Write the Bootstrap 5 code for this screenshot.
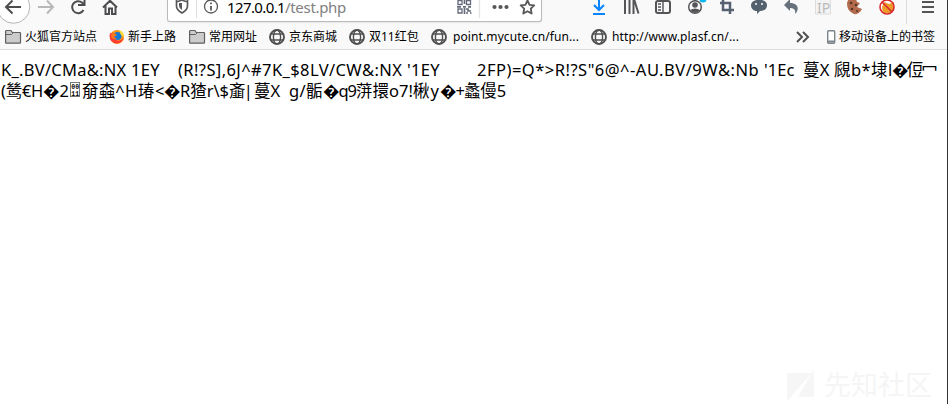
<!DOCTYPE html>
<html lang="zh-CN"><head><meta charset="utf-8"><title>127.0.0.1/test.php</title>
<link rel="stylesheet" href="https://cdn.jsdelivr.net/npm/bootstrap@5.3.0/dist/css/bootstrap.min.css">
<style>
body{width:948px;height:404px;font-family:"Noto Sans","Noto Sans CJK SC",sans-serif;color:#000;border-right:1px solid #333}
svg{display:block;flex:none;overflow:visible}
.chrome{height:50px;background:#f9f9fa;border-bottom:1px solid #ddd}
.toolrow{height:22px}
.nav-icons{width:167px;height:22px}
.urlbox{width:375px;height:22px;background:#fff;border:1px solid #bbb;border-top:0;border-radius:0 0 3px 3px;box-shadow:0 1px 2px #0001}
.urltext{width:228px;font-size:15px;line-height:14px}
.host-part{color:#000}.path-part{color:#808080}
.bookmarks{height:30px;font-size:12px;line-height:18px}
.bm{display:flex;align-items:center;gap:4px;white-space:nowrap;flex:none}
.content-line{height:21px;font-size:16.5px;line-height:21px;padding-left:1px}
[data-w]{display:block;flex:none;white-space:pre}
.watermark{position:absolute;left:786px;top:368px;color:#f5f5f5;font-size:27px;line-height:34px}
</style></head><body class="m-0 bg-white overflow-hidden position-relative">
<svg width="0" height="0" class="position-absolute"><defs>
<g id="folder"><path d="M.6 13.500V2.200Q.6 1.500 1.300 1.500H6l1.300 2h7.500q.7 0 .7.700v9.300q0 .7-.7.700H1.300q-.7 0-.7-.7Z" fill="#ccc" stroke="#606060" stroke-width="1.200"/><path d="M1 5.500H6.500L8 4" fill="none" stroke="#606060"/></g>
<g id="globe" fill="none" stroke="#505050" stroke-width="1.400"><circle cx="8" cy="8" r="7" stroke-width="1.900"/><ellipse cx="8" cy="8" rx="3.600" ry="7"/><path d="M2 5H14M2 11H14"/></g>
</defs></svg>
<header class="chrome"><div class="toolrow d-flex">
<svg class="nav-icons" viewBox="0 0 167 22" fill="none" stroke="#4d4d4f" stroke-width="2"><circle cx="13.500" cy="7" r="16.300" fill="#fff" stroke="#b5b5b5" stroke-width="1"/><path d="M21 7H6.500M12.500 .5 6 7l6.500 6.500"/><path d="M38 7H52M47 .5 53 7l-6 6.500" stroke="#b8b8b8"/><path d="M83.500 10A6 6 0 1 1 82 2.500L84 5M84.500-1V5H78"/><path d="M103 7.500 110 .7l7 6.800M105.500 6v8h3.500V8.500h3V14h3.500V6"/></svg>
<div class="urlbox d-flex">
<svg width="59" height="22" fill="none" stroke="#57575a"><path d="M14 0q4 2 5.500 1V6q0 4-5.500 7-5.500-3-5.500-7V1Q10 2 14 0Z" stroke-width="1.700"/><path d="M14 3v7q-3-2-3-4V3Z" fill="#57575a" stroke="none"/><path d="M28.500 0v18" stroke="#ddd"/><circle cx="43" cy="6.500" r="6.500" stroke-width="1.300"/><path d="M43 6v4.500M43 2.500v1.700" stroke-width="1.800"/></svg>
<div class="urltext d-flex"><span class="host-part" data-w="58">127.0.0.1</span><span class="path-part" data-w="61">/test.php</span></div>
<svg width="86" height="22" fill="none" stroke="#65697b" stroke-width="1.300"><path d="M3 .5h4v4H3ZM11.500 .5h4v4h-4ZM3 9h4v4H3Z"/><path d="M9.500 0v4M2 6.800h4M8 6.800h3M13 6.800h3M9.500 8v6M11 9h2v2h3M11 13h2M15 13h1.500" stroke-width="1.700"/><path d="M24.500 0v18" stroke="#e3e3e3"/><g fill="#57575a" stroke="none"><circle cx="39.500" cy="7" r="2.100"/><circle cx="45.500" cy="7" r="2.100"/><circle cx="51.500" cy="7" r="2.100"/></g><path d="m72.500 .5 2 4.300 4.700.6-3.400 3.300.8 4.800-4.100-2.300-4.200 2.300.9-4.800-3.500-3.300 4.700-.6Z" stroke="#57575a" stroke-width="1.800" stroke-linejoin="round"/></svg></div>
<svg width="405" height="24" viewBox="542 0 405 24" fill="none" stroke="#555558" stroke-width="2"><g stroke="#0a84ff"><path d="M599-1V9M594 5l5 5 5-5M593 14h12"/></g><path d="M625 0v14M629.500 0v14M633.500 0v14M634-1l4.500 14.500"/><rect x="656" y="1" width="14" height="12" rx="2"/><path d="M663 1v12M658 4h3M658 7h3M658 10h3" stroke-width="1.400"/><circle cx="695" cy="7" r="6.300" stroke-width="1.500"/><circle cx="695" cy="5" r="2.800" fill="#555558" stroke="none"/><path d="M690 10q5-3 10 0-2 3-5 3t-5-3Z" fill="#555558" stroke="none"/><circle cx="703" cy="-1" r="3.500" fill="#00b7f0" stroke="none"/><path d="M723 0v10h11M720 3h10v11" stroke="#566270" stroke-width="2.500"/><path d="M751 5c0-7 16-7 16 0 0 5-4 6-7 6l-3 3v-3c-3 0-6-2-6-6Z" fill="#53616e" stroke="none"/><circle cx="756" cy="4" r="1" fill="#fff" stroke="none"/><circle cx="762" cy="4" r="1" fill="#fff" stroke="none"/><path d="m784 5 6-6v4c8 0 10 6 5 11 1-4-1-6-5-6v3Z" fill="#66717c" stroke="none"/><rect x="815.500" y="-1" width="15" height="15" fill="#f3f3f3" stroke="#ddd" stroke-width="1"/><text x="817" y="12.500" font-family="Noto Sans" font-size="14" fill="#bbb" stroke="none">IP</text><path d="M847 4q0-7 9-5l1 3 3 1-3 4 5 2q-3 6-8 5-7-3-7-10Z" fill="#b46a4c" stroke="none"/><g fill="#55362b" stroke="none"><circle cx="851" cy="3" r="1.300"/><circle cx="856" cy="5" r="1.300"/><circle cx="852" cy="9" r="1.300"/><circle cx="857" cy="11" r="1"/></g><path d="M882 7l2-5 5 2 5-2v8l-4 3h-7Z" fill="#ef9b28" stroke="none"/><circle cx="887" cy="7" r="7" stroke="#d9282e" stroke-width="1.600"/><path d="m882 2 10 10" stroke="#d9282e" stroke-width="1.600"/><path d="M906.500 0v24" stroke="#ddd" stroke-width="1"/><path d="M922 2h12M922 7h12M922 12h12"/></svg>
</div>
<div class="bookmarks d-flex align-items-center">
<div class="bm" style="margin-left:5px;width:104px"><svg width="16" height="16"><use href="#folder"/></svg>火狐官方站点</div>
<div class="bm" style="width:80px"><svg width="15" height="16"><circle cx="8" cy="8" r="7" fill="#ff9518"/><path d="M1 4q-2 7 4 10 7 2 10-5-4 4-8 2-4-3-2-6Z" fill="#ff3b36"/><circle cx="8.500" cy="7" r="4" fill="#1679d5"/><path d="M3 3q3 1 5 3L5 8l3 2q-5 1-6-3Z" fill="#ff7520"/><path d="M10 1q5 2 5 7l-3-2Z" fill="#ffdf35"/></svg>新手上路</div>
<div class="bm" style="width:80px"><svg width="16" height="16"><use href="#folder"/></svg>常用网址</div>
<div class="bm" style="width:80px"><svg width="16" height="16"><use href="#globe"/></svg>京东商城</div>
<div class="bm" style="width:82px"><svg width="16" height="16"><use href="#globe"/></svg>双11红包</div>
<div class="bm" style="width:160px;gap:6px"><svg width="16" height="16"><use href="#globe"/></svg><span data-w="126">point.mycute.cn/fun...</span></div>
<div class="bm" style="width:205px;gap:5px"><svg width="16" height="16"><use href="#globe"/></svg><span data-w="127">http://www.plasf.cn/...</span></div>
<svg width="31" height="16" fill="none" stroke="#505050" stroke-width="2"><path d="m1 3 5 5-5 5M7 3l5 5-5 5"/></svg>
<div class="bm"><svg width="8" height="16"><rect x=".7" y="1.700" width="7" height="12.600" rx="1" fill="#fff" stroke="#7d858b" stroke-width="1.400"/><path d="M0 12.500h8" stroke="#7d858b" stroke-width="2"/></svg>移动设备上的书签</div>
</div></header>
<main style="padding-top:9px">
<div class="content-line d-flex"><span data-w="177">K_.BV/CMa&amp;:NX 1EY    </span><span data-w="229">(R!?S],6J^#7K_$8LV/CW&amp;:NX </span><span data-w="70">'1EY        </span><span data-w="287">2FP)=Q*>R!?S"6@^-AU.BV/9W&amp;:Nb </span><span data-w="39">'1Ec  </span><span data-w="31">蔓X </span><span data-w="54">覛b*埭</span><span data-w="4">l</span><span data-w="44">�侸冖</span></div>
<div class="content-line d-flex"><span data-w="42">(鸶€H</span><span data-w="26">�2</span><svg width="13" height="21"><rect x="1.500" y="2.500" width="9" height="14" fill="none" stroke="#777"/><g font-family="Liberation Mono" font-size="6.500" font-weight="700"><text x="2.300" y="9">00</text><text x="2.300" y="15.500">11</text></g></svg><span data-w="43">奟螙^</span><span data-w="30">H瑃</span><span data-w="25">&lt;�</span><span data-w="49">R猹r\$</span><span data-w="25">齑| </span><span data-w="35">蔓X  </span><span data-w="34">g/骺</span><span data-w="33">�q9</span><span data-w="57">蓱擐o7!</span><span data-w="27">楸y</span><span data-w="24">�+</span><span data-w="42">蠡僈5</span></div>
</main>
<div class="watermark d-flex gap-2"><svg width="30" height="34"><path d="M1 5H26L1 33ZM28 1V29H12Z" fill="#f6f6f6"/></svg>先知社区</div>
<script src="https://cdn.jsdelivr.net/npm/bootstrap@5.3.0/dist/js/bootstrap.bundle.min.js"></script>
<script>
// Spread each text run evenly over its own width.
document.querySelectorAll('[data-w]').forEach(function(run){
  var goal=+run.dataset.w, natural=run.getBoundingClientRect().width;
  run.style.letterSpacing=(goal-natural)/Array.from(run.textContent).length+'px';
  run.style.width=goal+'px';
});
</script></body></html>
